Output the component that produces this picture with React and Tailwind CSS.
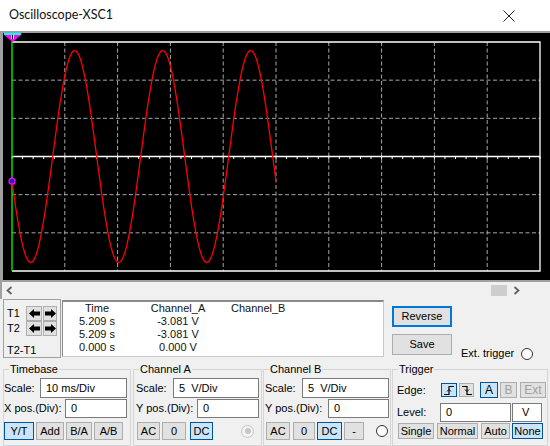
import React from 'react';

// scope screen geometry (page coordinates)
const LEFT = 12;
const RIGHT = 540;
const TOP = 42;
const BOTTOM = 271;
const MID = 156.5;
const DIV_X = (RIGHT - LEFT) / 10;
const DIV_Y = (BOTTOM - TOP) / 6;

const wavePath = () => {
  let d = '';
  for (let x = 12; x <= 276; x += 1) {
    const y = MID - 106 * Math.sin((2 * Math.PI * (x + 35.3)) / 88);
    d += (x === 12 ? 'M' : 'L') + x + ' ' + y.toFixed(1) + ' ';
  }
  return d;
};

const Screen = () => {
  const vx = [1, 2, 3, 4, 5, 6, 7, 8, 9].map(k => LEFT + DIV_X * k);
  const hy = [1, 2, 4, 5].map(k => TOP + DIV_Y * k);
  const ticks = [];
  for (let x = LEFT; x <= RIGHT; x += DIV_X / 5) ticks.push(x);

  return (
    <svg width="547" height="247" viewBox="3 33 547 247" className="block">
      <rect x="3" y="33" width="547" height="247" fill="#000" />
      {vx.map(x => (
        <line key={x} x1={x} y1={TOP} x2={x} y2={BOTTOM} stroke="#a8a8a8" strokeWidth="1" strokeDasharray="4 2.5" />
      ))}
      {hy.map(y => (
        <line key={y} x1={LEFT} y1={y} x2={RIGHT} y2={y} stroke="#a8a8a8" strokeWidth="1" strokeDasharray="4 2.5" />
      ))}
      <line x1={LEFT} y1={MID} x2={RIGHT} y2={MID} stroke="#fff" strokeWidth="1.3" />
      {ticks.map(x => (
        <line key={x} x1={x} y1={MID} x2={x} y2={MID + 2.5} stroke="#fff" strokeWidth="1" />
      ))}
      <path d={`M${LEFT} ${TOP}H${RIGHT}V${BOTTOM}H${LEFT}`} fill="none" stroke="#fff" strokeWidth="1.3" />
      <line x1={LEFT} y1={TOP - 1} x2={LEFT} y2={BOTTOM} stroke="#00ff00" strokeWidth="1.3" />
      <path d={wavePath()} fill="none" stroke="#ff0000" strokeWidth="1.3" />
      <circle cx="12" cy="181.2" r="3" fill="#2020c0" stroke="#ff00ff" strokeWidth="1.2" />
      {/* T1 cursor marker */}
      <rect x="4" y="33" width="17" height="2" fill="#00ffff" />
      <polygon points="4,35 21,35 12.5,42" fill="#ff00ff" />
      <rect x="11" y="35" width="3" height="4" fill="#ffff00" />
      <line x1="12.5" y1="35" x2="12.5" y2="39" stroke="#000" strokeWidth="1" />
    </svg>
  );
};

const Btn = ({ sel, dis, className = '', children }) => (
  <div
    className={`flex items-center justify-center border leading-none ${
      sel ? 'bg-[#cce4f7] border-[#005499]' : 'bg-[#e1e1e1] border-[#adadad]'
    } ${dis ? 'text-[#a0a0a0]' : 'text-black'} ${className}`}
  >
    {children}
  </div>
);

const Field = ({ className = '', children }) => (
  <div className={`flex items-center bg-white border border-[#7a7a7a] pl-[5px] ${className}`}>{children}</div>
);

const Arrow = ({ dir }) => (
  <svg width="11" height="9" viewBox="0 0 11 9">
    {dir === 'left' ? (
      <polygon points="0,4.5 5,0 5,2.5 11,2.5 11,6.5 5,6.5 5,9" fill="#000" />
    ) : (
      <polygon points="11,4.5 6,0 6,2.5 0,2.5 0,6.5 6,6.5 6,9" fill="#000" />
    )}
  </svg>
);

const Edge = ({ fall }) => (
  <svg width="12" height="11" viewBox="0 0 12 11">
    {fall ? (
      <>
        <path d="M1 1.5H6V9.5H11" fill="none" stroke="#000" strokeWidth="1.2" />
        <path d="M4 4.5L6 6.5L8 4.5" fill="none" stroke="#000" strokeWidth="1" />
      </>
    ) : (
      <>
        <path d="M1 9.5H6V1.5H11" fill="none" stroke="#000" strokeWidth="1.2" />
        <path d="M4 6.5L6 4.5L8 6.5" fill="none" stroke="#000" strokeWidth="1" />
      </>
    )}
  </svg>
);

const Group = ({ title, className = '', children }) => (
  <fieldset className={`border border-[#d5d5d5] h-[84px] mt-[3px] ${className}`}>
    <legend className="ml-[5px] px-[1px] leading-[14px]">{title}</legend>
    {children}
  </fieldset>
);

export default function App() {
  return (
    <div className="w-[550px] h-[446px] overflow-hidden bg-[#f0f0f0] text-[11px] text-black font-['Liberation_Sans',Arial,sans-serif]">
      {/* Title bar */}
      <div className="h-[31px] bg-white flex items-center pl-[9px]">
        <span className="text-[12.5px] font-['Lato',sans-serif] text-[#111]">Oscilloscope-XSC1</span>
        <svg className="ml-auto mr-[35px]" width="12" height="12" viewBox="0 0 12 12">
          <path d="M0.5 0.5L11.5 11.5M11.5 0.5L0.5 11.5" stroke="#222" strokeWidth="1" />
        </svg>
      </div>

      {/* Scope screen */}
      <div className="h-[251px] border-t-2 border-b-2 border-l-[3px] border-[#a0a0a0]">
        <Screen />
      </div>

      {/* Scrollbar */}
      <div className="h-[17px] flex items-center border-l-2 border-[#a0a0a0]">
        <svg className="ml-[4px]" width="7" height="9" viewBox="0 0 7 9">
          <path d="M5.5 1L1.5 4.5L5.5 8" fill="none" stroke="#606060" strokeWidth="1.8" />
        </svg>
        <div className="ml-auto w-[16px] h-[11px] bg-[#cdcdcd]" />
        <svg className="ml-[6px] mr-[30px]" width="7" height="9" viewBox="0 0 7 9">
          <path d="M1.5 1L5.5 4.5L1.5 8" fill="none" stroke="#606060" strokeWidth="1.8" />
        </svg>
      </div>

      {/* Cursor readout */}
      <div className="h-[60px] flex">
        <div className="ml-[3px] w-[58px] h-[59px] border border-[#a0a0a0] pt-[6px]">
          <div className="flex items-center h-[15px]">
            <span className="w-[22px] pl-[3px]">T1</span>
            <Btn className="w-[16px] h-[15px]"><Arrow dir="left" /></Btn>
            <Btn className="ml-[1px] w-[14px] h-[15px]"><Arrow dir="right" /></Btn>
          </div>
          <div className="flex items-center h-[15px]">
            <span className="w-[22px] pl-[3px]">T2</span>
            <Btn className="w-[16px] h-[15px]"><Arrow dir="left" /></Btn>
            <Btn className="ml-[1px] w-[14px] h-[15px]"><Arrow dir="right" /></Btn>
          </div>
          <div className="mt-[7px] pl-[3px] leading-[14px]">T2-T1</div>
        </div>

        <div className="ml-[1px] mt-[1px] w-[322px] h-[57px] bg-white border border-[#c8c8c8] border-t-2 border-t-[#8a8a8a] border-l-[#8a8a8a] leading-[13px] text-[#111]">
          {[
            ['Time', 'Channel_A', 'Channel_B'],
            ['5.209 s', '-3.081 V', ''],
            ['5.209 s', '-3.081 V', ''],
            ['0.000 s', '0.000 V', ''],
          ].map((r, i) => (
            <div key={i} className="flex">
              <span className="w-[68px] text-center">{r[0]}</span>
              <span className="w-[94px] text-center">{r[1]}</span>
              <span className="w-[96px] pl-[6px]">{r[2]}</span>
            </div>
          ))}
        </div>

        <div className="ml-[8px] w-[60px]">
          <div className="mt-[7px] h-[21px] flex items-center justify-center bg-[#e1e1e1] border-2 border-[#0078d7]">Reverse</div>
          <div className="mt-[7px] h-[21px] flex items-center justify-center bg-[#e1e1e1] border border-[#adadad]">Save</div>
        </div>

        <div className="ml-[9px] mt-[48px] h-[13px] flex items-center">
          <span>Ext. trigger</span>
          <div className="ml-[7px] w-[12px] h-[12px] rounded-full bg-white border border-[#333]" />
        </div>
      </div>

      {/* Control groups */}
      <div className="flex">
        <Group title="Timebase" className="ml-[3px] w-[128px]">
          <div className="mt-[2px] flex items-center h-[20px]">
            <span className="w-[36px]">Scale:</span>
            <Field className="w-[87px] h-[20px]">10 ms/Div</Field>
          </div>
          <div className="mt-[1px] flex items-center h-[19px]">
            <span className="w-[61px]">X pos.(Div):</span>
            <Field className="w-[62px] h-[19px]">0</Field>
          </div>
          <div className="mt-[4px] flex h-[18px]">
            <Btn sel className="w-[30px] h-[18px]">Y/T</Btn>
            <Btn className="ml-[2px] w-[28px] h-[18px]">Add</Btn>
            <Btn className="ml-[2px] w-[26px] h-[18px]">B/A</Btn>
            <Btn className="ml-[2px] w-[29px] h-[18px]">A/B</Btn>
          </div>
        </Group>

        <Group title="Channel A" className="ml-[2px] w-[129px]">
          <div className="mt-[2px] flex items-center h-[20px]">
            <span className="w-[39px] pl-[2px]">Scale:</span>
            <Field className="w-[86px] h-[20px]">5&nbsp;&nbsp;V/Div</Field>
          </div>
          <div className="mt-[1px] flex items-center h-[19px]">
            <span className="w-[63px] pl-[2px]">Y pos.(Div):</span>
            <Field className="w-[62px] h-[19px]">0</Field>
          </div>
          <div className="mt-[4px] flex items-center h-[18px] pl-[3px]">
            <Btn className="w-[23px] h-[18px]">AC</Btn>
            <Btn className="ml-[2px] w-[24px] h-[18px]">0</Btn>
            <Btn sel className="ml-[4px] w-[23px] h-[18px]">DC</Btn>
            <div className="ml-[28px] w-[13px] h-[13px] rounded-full border border-[#c4c4c4] bg-[#f4f4f4] flex items-center justify-center">
              <div className="w-[6px] h-[6px] rounded-full bg-[#c6c6c6]" />
            </div>
          </div>
        </Group>

        <Group title="Channel B" className="ml-[1px] w-[128px]">
          <div className="mt-[2px] flex items-center h-[20px]">
            <span className="w-[38px] pl-[1px]">Scale:</span>
            <Field className="w-[87px] h-[20px]">5&nbsp;&nbsp;V/Div</Field>
          </div>
          <div className="mt-[1px] flex items-center h-[19px]">
            <span className="w-[64px] pl-[1px]">Y pos.(Div):</span>
            <Field className="w-[61px] h-[19px]">0</Field>
          </div>
          <div className="mt-[4px] flex items-center h-[18px] pl-[2px]">
            <Btn className="w-[24px] h-[18px]">AC</Btn>
            <Btn className="ml-[3px] w-[22px] h-[18px]">0</Btn>
            <Btn sel className="ml-[2px] w-[25px] h-[18px]">DC</Btn>
            <Btn className="ml-[2px] w-[20px] h-[18px]">-</Btn>
            <div className="ml-[12px] w-[12px] h-[12px] rounded-full bg-white border border-[#333]" />
          </div>
        </Group>

        <Group title="Trigger" className="ml-[1px] w-[156px]">
          <div className="mt-[6px] flex items-center h-[16px]">
            <span className="w-[48px] pl-[4px]">Edge:</span>
            <Btn sel className="w-[16px] h-[14px]"><Edge /></Btn>
            <Btn className="ml-[2px] w-[15px] h-[14px]"><Edge fall /></Btn>
            <Btn sel className="ml-[6px] w-[18px] h-[16px] text-[12px]">A</Btn>
            <Btn dis className="ml-[2px] w-[17px] h-[16px] text-[12px]">B</Btn>
            <Btn dis className="ml-[3px] w-[26px] h-[16px] text-[12px]">Ext</Btn>
          </div>
          <div className="mt-[5px] flex items-center h-[19px]">
            <span className="w-[47px] pl-[4px]">Level:</span>
            <Field className="w-[71px] h-[19px]">0</Field>
            <Field className="ml-[1px] w-[30px] h-[19px] pl-[9px]">V</Field>
          </div>
          <div className="mt-[1px] flex h-[16px] pl-[5px]">
            <Btn className="w-[36px] h-[16px]">Single</Btn>
            <Btn className="ml-[3px] w-[41px] h-[16px]">Normal</Btn>
            <Btn className="ml-[3px] w-[29px] h-[16px]">Auto</Btn>
            <Btn sel className="ml-[2px] w-[31px] h-[16px]">None</Btn>
          </div>
        </Group>
      </div>
    </div>
  );
}
